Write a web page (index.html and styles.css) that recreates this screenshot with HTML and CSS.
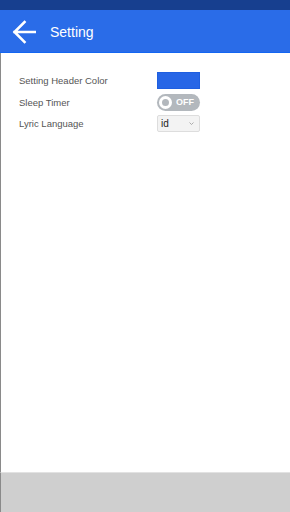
FILE: index.html
```html
<!DOCTYPE html>
<html>
<head>
<meta charset="utf-8">
<link rel="stylesheet" href="styles.css">
</head>
<body>
<div class="app">
  <div class="status"></div>
  <header class="header">
    <svg class="back" width="24" height="24" viewBox="0 0 24 24">
      <path d="M23 12H2.5M12.5 2L2.5 12l10 10" fill="none" stroke="#fff" stroke-width="2.6" stroke-linecap="square"/>
    </svg>
    <span class="title">Setting</span>
  </header>
  <main class="content">
    <div class="settings">
      <span class="label">Setting Header Color</span>
      <span class="swatch"></span>
      <span class="label">Sleep Timer</span>
      <span class="toggle"><span class="knob"></span><span class="off">OFF</span></span>
      <span class="label">Lyric Language</span>
      <span class="select">id<svg width="5" height="3" viewBox="0 0 5 3"><path d="M0.5 0.5L2.5 2.5L4.5 0.5" fill="none" stroke="#999" stroke-width="0.8"/></svg></span>
    </div>
  </main>
  <footer class="footer"></footer>
</div>
</body>
</html>
```

FILE: styles.css
```css
html, body { margin: 0; padding: 0; }
body { font-family: "Liberation Sans", Arial, sans-serif; background: #fff; }
.app { width: 290px; height: 512px; display: flex; flex-direction: column; }
.status { height: 10px; background: #173f8f; flex: none; }
.header { background: #2a6ce8; border-bottom: 1px solid #1366f2; flex: none; display: flex; align-items: center; box-sizing: border-box; height: 43px; padding-left: 12px; }
.back { display: block; margin-right: 14px; margin-top: 1px; }
.title { color: #fff; font-size: 14px; margin-top: 1px; }
.content { flex: 1; border-left: 1px solid #8a8a8a; padding: 19px 0 0 18px; }
.settings { display: grid; grid-template-columns: 138px 43px; grid-template-rows: 17px 17px 17px; row-gap: 4.5px; align-items: center; }
.label { font-size: 9.5px; color: #555; line-height: 17px; }
.swatch { height: 17px; background: #2766e6; box-sizing: border-box; border: 1px solid #1f5fe0; }
.toggle { height: 17px; background: #b3b8bd; border-radius: 9px; display: flex; align-items: center; padding-left: 2px; box-sizing: border-box; }
.knob { width: 13px; height: 13px; box-sizing: border-box; border: 3px solid #fff; border-radius: 50%; background: #b3b8bd; margin-right: 4px; }
.off { color: #fff; font-size: 9px; font-weight: bold; }
.select { height: 17px; box-sizing: border-box; border: 1px solid #ddd; border-radius: 2px; background: #f3f3f3; font-size: 10px; color: #222; display: flex; align-items: center; justify-content: space-between; padding: 0 5px 0 3px; }
.footer { height: 40px; flex: none; background: #cfcfcf; border-top: 1px solid #e2e2e2; border-left: 1px solid #8a8a8a; box-sizing: border-box; }
```
